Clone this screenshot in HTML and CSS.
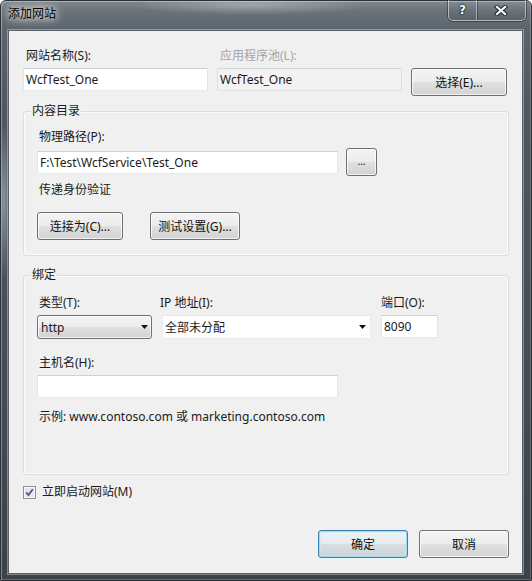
FILE: index.html
```html
<!DOCTYPE html>
<html lang="zh-CN">
<head>
<meta charset="utf-8">
<title>添加网站</title>
<link rel="stylesheet" href="styles.css">
</head>
<body>
<div class="window">
  <div class="titlebar">
    <span class="title">添加网站</span>
    <div class="caption">
      <div class="cap cap-help">?</div>
      <div class="cap cap-close">
        <svg width="14" height="11" viewBox="0 0 14 11">
          <path d="M3 2 L11 9 M11 2 L3 9" stroke="#252a30" stroke-width="4.2" stroke-linecap="square"/>
          <path d="M3 2 L11 9 M11 2 L3 9" stroke="#ffffff" stroke-width="2.2" stroke-linecap="square"/>
        </svg>
      </div>
    </div>
  </div>
  <div class="client">
    <div class="site-row">
      <div class="lbl">网站名称(S):</div>
      <div class="lbl disabled">应用程序池(L):</div>
      <div></div>
      <div class="tb">WcfTest_One</div>
      <div class="tb readonly">WcfTest_One</div>
      <div class="btn btn-select">选择(E)...</div>
    </div>

    <fieldset class="group group-content">
      <legend>内容目录</legend>
      <div class="lbl lbl-path">物理路径(P):</div>
      <div class="path-row">
        <div class="tb tb-path">F:\Test\WcfService\Test_One</div>
        <div class="btn btn-browse">...</div>
      </div>
      <div class="lbl lbl-pass">传递身份验证</div>
      <div class="auth-row">
        <div class="btn btn-connect">连接为(C)...</div>
        <div class="btn btn-test">测试设置(G)...</div>
      </div>
    </fieldset>

    <fieldset class="group group-binding">
      <legend>绑定</legend>
      <div class="bind-grid">
        <div class="lbl">类型(T):</div>
        <div class="lbl lbl-ip">IP 地址(I):</div>
        <div class="lbl lbl-port">端口(O):</div>
        <div class="combo combo-type"><span>http</span><svg width="7" height="4" viewBox="0 0 7 4"><path d="M0 0H7L3.5 4Z" fill="#111"/></svg></div>
        <div class="combo combo-ip"><span>全部未分配</span><svg width="7" height="4" viewBox="0 0 7 4"><path d="M0 0H7L3.5 4Z" fill="#111"/></svg></div>
        <div class="tb tb-port">8090</div>
      </div>
      <div class="lbl lbl-host">主机名(H):</div>
      <div class="tb tb-host"></div>
      <div class="lbl lbl-example">示例: www.contoso.com 或 marketing.contoso.com</div>
    </fieldset>

    <div class="check-row">
      <svg class="checkbox" width="13" height="13" viewBox="0 0 13 13">
        <rect x="0.5" y="0.5" width="12" height="12" fill="#f2f2f2" stroke="#8e8f8f"/>
        <rect x="1.5" y="1.5" width="10" height="10" fill="#e6e6e8" stroke="#f8f8f8"/>
        <path d="M3.2 6.4 L5.4 9 L9.8 3.2" fill="none" stroke="#4b5a8c" stroke-width="1.8"/>
      </svg>
      <span class="lbl">立即启动网站(M)</span>
    </div>

    <div class="dialog-buttons">
      <div class="btn btn-default">确定</div>
      <div class="btn">取消</div>
    </div>
  </div>
</div>
</body>
</html>
```

FILE: styles.css
```css
* { box-sizing: border-box; }

html, body {
  margin: 0;
  padding: 0;
}

body {
  width: 532px;
  height: 581px;
  overflow: hidden;
  background: #ffffff;
  font-family: "Noto Sans", "Noto Sans CJK SC", sans-serif;
  font-size: 12px;
  color: #1a1a1a;
}

.window {
  width: 532px;
  height: 581px;
  display: flex;
  flex-direction: column;
  border: 1px solid #2a3036;
  border-radius: 6px 6px 0 0;
  background:
    radial-gradient(ellipse 120px 10px at 250px 4px, rgba(210, 215, 220, 0.45), transparent),
    radial-gradient(ellipse 6px 80px at 3px 200px, rgba(190, 205, 220, 0.55), transparent),
    linear-gradient(180deg, #7e878e 0px, #6a737a 10px, #5c646b 29px, #4f575e 120px, #444b52 400px, #3c4248 100%);
  box-shadow: inset 1px 1px 0 rgba(255, 255, 255, 0.35), inset -1px -1px 0 rgba(255, 255, 255, 0.2);
}

.titlebar {
  height: 29px;
  display: flex;
  align-items: flex-start;
  padding: 0 5px 0 7px;
}

.title {
  margin-top: 5px;
  line-height: 16px;
  color: #000;
  text-shadow: 0 0 6px rgba(255, 255, 255, 0.95), 0 0 10px rgba(255, 255, 255, 0.8), 0 0 14px rgba(255, 255, 255, 0.6);
}

.caption {
  margin-left: auto;
  margin-top: -1px;
  display: flex;
  border: 1px solid rgba(255, 255, 255, 0.5);
  border-top: none;
  border-radius: 0 0 5px 5px;
  box-shadow: 0 0 0 1px rgba(20, 25, 30, 0.45);
  background: linear-gradient(180deg, rgba(255, 255, 255, 0.06), rgba(0, 0, 0, 0.08));
}

.cap {
  height: 20px;
  display: flex;
  align-items: center;
  justify-content: center;
}

.cap-help {
  width: 28px;
  border-right: 1px solid rgba(255, 255, 255, 0.45);
  box-shadow: 1px 0 0 rgba(20, 25, 30, 0.4);
  font-family: "DejaVu Sans", sans-serif;
  font-weight: bold;
  font-size: 12px;
  color: #fff;
  text-shadow: 0 0 1px #1d2226, 0 0 2px #1d2226, 0 0 2px #1d2226;
}

.cap-close {
  width: 48px;
}

.client {
  flex: 1;
  margin: 0 8px 6px 7px;
  background: #f0f0f0;
  border: 1px solid #59616a;
  box-shadow: 0 0 0 1px rgba(255, 255, 255, 0.35);
  display: flex;
  flex-direction: column;
  padding: 17px 13px 15px 14px;
}

.lbl {
  line-height: 16px;
  padding-left: 2px;
  white-space: nowrap;
}

.lbl.disabled {
  color: #a3a3a3;
  padding-left: 3px;
}

.site-row {
  display: grid;
  grid-template-columns: 185px 185px 96px;
  column-gap: 9px;
  row-gap: 4px;
  align-items: start;
}

.site-row > .lbl:first-child {
  padding-left: 3px;
}

.tb {
  height: 23px;
  line-height: 21px;
  padding-left: 2px;
  background: #ffffff;
  border: 1px solid;
  border-color: #cdd0d5 #e2e5e9 #e6e9ec #e2e5e9;
  white-space: nowrap;
  overflow: hidden;
}

.tb.readonly {
  background: #f2f2f2;
  border-color: #d6d6d6 #dedede #e2e2e2 #dedede;
  padding-left: 2px;
}

.btn {
  height: 28px;
  display: flex;
  align-items: center;
  justify-content: center;
  border: 1px solid #707070;
  border-radius: 3px;
  background: linear-gradient(180deg, #f4f4f4 0%, #ececec 48%, #dfdfdf 52%, #d3d3d3 100%);
  box-shadow: inset 0 0 0 1px rgba(255, 255, 255, 0.75);
  color: #111;
  white-space: nowrap;
}

.btn-select {
  width: 96px;
  margin-top: 0;
}

.group {
  margin: 0;
  min-width: 0;
  border: 1px solid #d5dfe5;
  border-radius: 3px;
  box-shadow: inset 0 0 0 1px rgba(255, 255, 255, 0.7);
}

.group legend {
  line-height: 16px;
  padding: 0 1px;
  margin-left: -6px;
  background: #f0f0f0;
}

.group-content {
  margin-top: 7px;
  padding: 10px 12px 15px 13px;
}

.lbl-path {
  margin-bottom: 3px;
}

.path-row {
  display: flex;
  align-items: center;
  gap: 8px;
  height: 28px;
}

.tb-path {
  width: 301px;
  padding-left: 2px;
}

.btn-browse {
  width: 31px;
  font-size: 10px;
  line-height: 1;
  padding-bottom: 3px;
}

.lbl-pass {
  margin-top: 6px;
}

.auth-row {
  display: flex;
  gap: 27px;
  margin-top: 14px;
}

.btn-connect { width: 86px; }
.btn-test { width: 90px; }

.group-binding {
  margin-top: 11px;
  padding: 12px 12px 49px 13px;
}

.bind-grid {
  display: grid;
  grid-template-columns: 115px 209px 57px;
  column-gap: 10px;
  row-gap: 4px;
  align-items: start;
}

.lbl-ip {
  padding-left: 0;
  margin-left: -2px;
}

.lbl-port {
  padding-left: 0;
}

.combo {
  height: 24px;
  display: flex;
  align-items: center;
  justify-content: space-between;
  white-space: nowrap;
}

.combo svg { flex: none; }

.combo-type {
  border: 1px solid #707070;
  border-radius: 3px;
  background: linear-gradient(180deg, #f4f4f4 0%, #ececec 48%, #dfdfdf 52%, #d3d3d3 100%);
  box-shadow: inset 0 0 0 1px rgba(255, 255, 255, 0.7);
  padding: 0 3px 0 3px;
}

.combo-ip {
  background: #ffffff;
  border: 1px solid;
  border-color: #e4e6ea #e8eaed #e8eaed #e8eaed;
  padding: 0 4px 0 2px;
}

.tb-port {
  height: 23px;
  padding-left: 2px;
}

.lbl-host {
  margin-top: 16px;
}

.tb-host {
  width: 301px;
  margin-top: 4px;
}

.lbl-example {
  margin-top: 11px;
}

.check-row {
  display: flex;
  align-items: center;
  gap: 4px;
  margin-top: 9px;
  height: 16px;
}

.checkbox { flex: none; }

.dialog-buttons {
  margin-top: auto;
  display: flex;
  justify-content: flex-end;
  gap: 11px;
}

.dialog-buttons .btn {
  width: 90px;
}

.btn-default {
  border-color: #3c7fb1;
  box-shadow: inset 0 0 0 1px rgba(150, 215, 245, 0.9), inset 0 0 0 2px rgba(200, 235, 250, 0.5);
  background: linear-gradient(180deg, #eef3f6 0%, #e6ebee 48%, #d9dee1 52%, #cdd3d7 100%);
}
```
